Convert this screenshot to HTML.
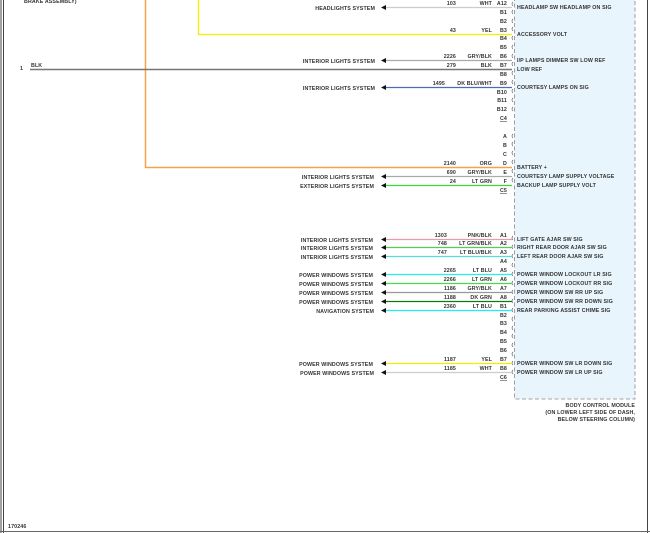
<!DOCTYPE html>
<html><head><meta charset="utf-8"><style>
html,body{margin:0;padding:0;background:#fff;width:650px;height:533px;overflow:hidden}
svg{display:block}
text{font-family:"Liberation Sans",Arial,sans-serif;font-size:5.3px;font-weight:bold;fill:#333;letter-spacing:0.12px}
.r{text-anchor:end}
</style></head><body>
<svg width="650" height="533" viewBox="0 0 650 533" xmlns="http://www.w3.org/2000/svg">
<line x1="1" y1="0" x2="1" y2="533" stroke="#444" stroke-width="1"/>
<line x1="3.5" y1="0" x2="3.5" y2="533" stroke="#444" stroke-width="1"/>
<line x1="647.5" y1="0" x2="647.5" y2="533" stroke="#444" stroke-width="1"/>
<line x1="0" y1="531.5" x2="650" y2="531.5" stroke="#666" stroke-width="1"/>
<text x="24" y="3">BRAKE ASSEMBLY)</text>
<text x="8" y="528">170246</text>
<rect x="514.5" y="-2" width="120.5" height="401" fill="#e9f5fc" stroke="#888" stroke-width="0.8" stroke-dasharray="4,2.5"/>
<text x="635" y="407" class="r">BODY CONTROL MODULE</text>
<text x="635" y="414" class="r">(ON LOWER LEFT SIDE OF DASH,</text>
<text x="635" y="421" class="r">BELOW STEERING COLUMN)</text>
<polyline points="198.5,0 198.5,34.5 512,34.5" fill="none" stroke="#f2ee00" stroke-width="1.3"/>
<polyline points="145.5,0 145.5,167.5 512,167.5" fill="none" stroke="#f7a24a" stroke-width="1.5"/>
<line x1="30" y1="69.5" x2="512" y2="69.5" stroke="#777" stroke-width="1.5"/>
<text x="20" y="70">1</text><text x="31" y="67">BLK</text>
<g stroke="#555" stroke-width="0.6" fill="none">
<path d="M513 2 q-2 2 0 4 M513 10 q-2 2 0 4 M513 19 q-2 2 0 4 M513 27 q-2 2 0 4 M513 36 q-2 2 0 4 M513 45 q-2 2 0 4 M513 54 q-2 2 0 4 M513 62 q-2 2 0 4 M513 71 q-2 2 0 4 M513 80 q-2 2 0 4 M513 89 q-2 2 0 4 M513 98 q-2 2 0 4 M513 107 q-2 2 0 4"/>
<path d="M513 134 q-2 2 0 4 M513 142 q-2 2 0 4 M513 151 q-2 2 0 4 M513 160 q-2 2 0 4 M513 169 q-2 2 0 4 M513 178 q-2 2 0 4"/>
<path d="M513 236 q-2 2 0 4 M513 245 q-2 2 0 4 M513 254 q-2 2 0 4 M513 263 q-2 2 0 4 M513 272 q-2 2 0 4 M513 281 q-2 2 0 4 M513 290 q-2 2 0 4 M513 299 q-2 2 0 4 M513 308 q-2 2 0 4 M513 317 q-2 2 0 4 M513 326 q-2 2 0 4 M513 334 q-2 2 0 4 M513 343 q-2 2 0 4 M513 352 q-2 2 0 4 M513 361 q-2 2 0 4 M513 370 q-2 2 0 4"/>
</g>
<g stroke-width="1.2">
<line x1="386" y1="7.5" x2="512" y2="7.5" stroke="#ccc"/>
<line x1="386" y1="60.5" x2="512" y2="60.5" stroke="#aaa"/>
<line x1="386" y1="87.5" x2="512" y2="87.5" stroke="#4a6fb0"/>
<line x1="386" y1="176.5" x2="512" y2="176.5" stroke="#aaa"/>
<line x1="386" y1="185.5" x2="512" y2="185.5" stroke="#33dd33"/>
<line x1="386" y1="239.5" x2="512" y2="239.5" stroke="#ee99aa"/>
<line x1="386" y1="247.5" x2="512" y2="247.5" stroke="#55cc55"/>
<line x1="386" y1="256.5" x2="512" y2="256.5" stroke="#55dddd"/>
<line x1="386" y1="274.5" x2="512" y2="274.5" stroke="#22eeee"/>
<line x1="386" y1="283.5" x2="512" y2="283.5" stroke="#44dd44"/>
<line x1="386" y1="292.5" x2="512" y2="292.5" stroke="#999"/>
<line x1="386" y1="301.5" x2="512" y2="301.5" stroke="#117711"/>
<line x1="386" y1="310.5" x2="512" y2="310.5" stroke="#22eeee"/>
<line x1="386" y1="363.5" x2="512" y2="363.5" stroke="#f2ee00"/>
<line x1="386" y1="372.5" x2="512" y2="372.5" stroke="#ccc"/>
</g>
<g fill="#111">
<path d="M381 7.5 l5 -2.5 v5z"/><path d="M381 60.5 l5 -2.5 v5z"/><path d="M381 87.5 l5 -2.5 v5z"/>
<path d="M381 176.5 l5 -2.5 v5z"/><path d="M381 185.5 l5 -2.5 v5z"/>
<path d="M381 239.5 l5 -2.5 v5z"/><path d="M381 247.5 l5 -2.5 v5z"/><path d="M381 256.5 l5 -2.5 v5z"/>
<path d="M381 274.5 l5 -2.5 v5z"/><path d="M381 283.5 l5 -2.5 v5z"/><path d="M381 292.5 l5 -2.5 v5z"/>
<path d="M381 301.5 l5 -2.5 v5z"/><path d="M381 310.5 l5 -2.5 v5z"/><path d="M381 363.5 l5 -2.5 v5z"/><path d="M381 372.5 l5 -2.5 v5z"/>
</g>
<text x="375" y="10" class="r">HEADLIGHTS SYSTEM</text>
<text x="375" y="63" class="r">INTERIOR LIGHTS SYSTEM</text>
<text x="375" y="90" class="r">INTERIOR LIGHTS SYSTEM</text>
<text x="374" y="179" class="r">INTERIOR LIGHTS SYSTEM</text>
<text x="374" y="188" class="r">EXTERIOR LIGHTS SYSTEM</text>
<text x="373" y="242" class="r">INTERIOR LIGHTS SYSTEM</text>
<text x="373" y="250" class="r">INTERIOR LIGHTS SYSTEM</text>
<text x="373" y="259" class="r">INTERIOR LIGHTS SYSTEM</text>
<text x="373" y="277" class="r">POWER WINDOWS SYSTEM</text>
<text x="373" y="286" class="r">POWER WINDOWS SYSTEM</text>
<text x="373" y="295" class="r">POWER WINDOWS SYSTEM</text>
<text x="373" y="304" class="r">POWER WINDOWS SYSTEM</text>
<text x="374" y="313" class="r">NAVIGATION SYSTEM</text>
<text x="373" y="366" class="r">POWER WINDOWS SYSTEM</text>
<text x="374" y="375" class="r">POWER WINDOWS SYSTEM</text>
<text x="456" y="5" class="r">103</text><text x="456" y="32" class="r">43</text>
<text x="456" y="58" class="r">2226</text><text x="456" y="67" class="r">279</text>
<text x="445" y="85" class="r">1495</text><text x="456" y="165" class="r">2140</text>
<text x="456" y="174" class="r">690</text><text x="456" y="183" class="r">24</text>
<text x="447" y="237" class="r">1303</text><text x="447" y="245" class="r">748</text><text x="447" y="254" class="r">747</text>
<text x="456" y="272" class="r">2265</text><text x="456" y="281" class="r">2266</text><text x="456" y="290" class="r">1186</text>
<text x="456" y="299" class="r">1188</text><text x="456" y="308" class="r">2360</text>
<text x="456" y="361" class="r">1187</text><text x="456" y="370" class="r">1185</text>
<text x="492" y="5" class="r">WHT</text><text x="492" y="32" class="r">YEL</text>
<text x="492" y="58" class="r">GRY/BLK</text><text x="492" y="67" class="r">BLK</text>
<text x="492" y="85" class="r">DK BLU/WHT</text><text x="492" y="165" class="r">ORG</text>
<text x="492" y="174" class="r">GRY/BLK</text><text x="492" y="183" class="r">LT GRN</text>
<text x="492" y="237" class="r">PNK/BLK</text><text x="492" y="245" class="r">LT GRN/BLK</text><text x="492" y="254" class="r">LT BLU/BLK</text>
<text x="492" y="272" class="r">LT BLU</text><text x="492" y="281" class="r">LT GRN</text><text x="492" y="290" class="r">GRY/BLK</text>
<text x="492" y="299" class="r">DK GRN</text><text x="492" y="308" class="r">LT BLU</text>
<text x="492" y="361" class="r">YEL</text><text x="492" y="370" class="r">WHT</text>
<text x="507" y="5" class="r">A12</text><text x="507" y="14" class="r">B1</text><text x="507" y="23" class="r">B2</text>
<text x="507" y="32" class="r">B3</text><text x="507" y="40" class="r">B4</text><text x="507" y="49" class="r">B5</text>
<text x="507" y="58" class="r">B6</text><text x="507" y="67" class="r">B7</text><text x="507" y="76" class="r">B8</text>
<text x="507" y="85" class="r">B9</text><text x="507" y="94" class="r">B10</text><text x="507" y="102" class="r">B11</text>
<text x="507" y="111" class="r">B12</text><text x="507" y="120" class="r" text-decoration="underline">C4</text>
<text x="507" y="138" class="r">A</text><text x="507" y="147" class="r">B</text><text x="507" y="156" class="r">C</text>
<text x="507" y="165" class="r">D</text><text x="507" y="174" class="r">E</text><text x="507" y="183" class="r">F</text>
<text x="507" y="192" class="r" text-decoration="underline">C5</text>
<text x="507" y="237" class="r">A1</text><text x="507" y="245" class="r">A2</text><text x="507" y="254" class="r">A3</text>
<text x="507" y="263" class="r">A4</text><text x="507" y="272" class="r">A5</text><text x="507" y="281" class="r">A6</text>
<text x="507" y="290" class="r">A7</text><text x="507" y="299" class="r">A8</text><text x="507" y="308" class="r">B1</text>
<text x="507" y="317" class="r">B2</text><text x="507" y="325" class="r">B3</text><text x="507" y="334" class="r">B4</text>
<text x="507" y="343" class="r">B5</text><text x="507" y="352" class="r">B6</text><text x="507" y="361" class="r">B7</text>
<text x="507" y="370" class="r">B8</text><text x="507" y="379" class="r" text-decoration="underline">C6</text>
<text x="517" y="9">HEADLAMP SW HEADLAMP ON SIG</text>
<text x="517" y="36">ACCESSORY VOLT</text>
<text x="517" y="62">I/P LAMPS DIMMER SW LOW REF</text>
<text x="517" y="71">LOW REF</text>
<text x="517" y="89">COURTESY LAMPS ON SIG</text>
<text x="517" y="169">BATTERY +</text>
<text x="517" y="178">COURTESY LAMP SUPPLY VOLTAGE</text>
<text x="517" y="187">BACKUP LAMP SUPPLY VOLT</text>
<text x="517" y="241">LIFT GATE AJAR SW SIG</text>
<text x="517" y="249">RIGHT REAR DOOR AJAR SW SIG</text>
<text x="517" y="258">LEFT REAR DOOR AJAR SW SIG</text>
<text x="517" y="276">POWER WINDOW LOCKOUT LR SIG</text>
<text x="517" y="285">POWER WINDOW LOCKOUT RR SIG</text>
<text x="517" y="294">POWER WINDOW SW RR UP SIG</text>
<text x="517" y="303">POWER WINDOW SW RR DOWN SIG</text>
<text x="517" y="312">REAR PARKING ASSIST CHIME SIG</text>
<text x="517" y="365">POWER WINDOW SW LR DOWN SIG</text>
<text x="517" y="374">POWER WINDOW SW LR UP SIG</text>
</svg>
</body></html>
